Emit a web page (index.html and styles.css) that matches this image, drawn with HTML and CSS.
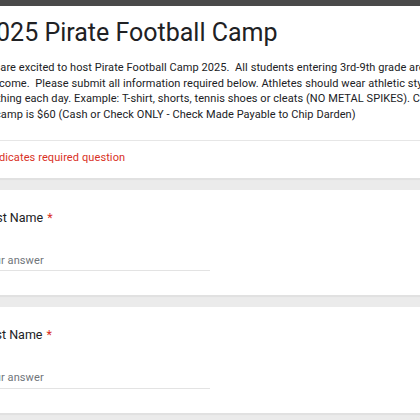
FILE: index.html
```html
<!DOCTYPE html>
<html lang="en">
<head>
<meta charset="utf-8">
<title>2025 Pirate Football Camp</title>
<link rel="stylesheet" href="styles.css">
</head>
<body>
<div class="page">
  <div class="card header">
    <div class="head-main">
      <h1 class="title">2025 Pirate Football Camp</h1>
      <div class="desc">We are excited to host Pirate Football Camp 2025.  All students entering 3rd-9th grade are
welcome.  Please submit all information required below. Athletes should wear athletic style
clothing each day. Example: T-shirt, shorts, tennis shoes or cleats (NO METAL SPIKES). Cost
of camp is $60 (Cash or Check ONLY - Check Made Payable to Chip Darden)</div>
    </div>
    <div class="required">* Indicates required question</div>
  </div>

  <div class="card question">
    <div class="label">First Name<span class="star">*</span></div>
    <div class="answer">Your answer</div>
  </div>

  <div class="card question">
    <div class="label">Last Name<span class="star">*</span></div>
    <div class="answer">Your answer</div>
  </div>

  <div class="card question">
    <div class="label">Grade<span class="star">*</span></div>
    <div class="answer">Your answer</div>
  </div>
</div>
</body>
</html>
```
FILE: styles.css
```css
html, body {
  margin: 0;
  padding: 0;
  background: #ebebeb;
  overflow: hidden;
}

body {
  font-family: Roboto, "Liberation Sans", sans-serif;
  color: #202124;
}

.page {
  margin-left: -43px;
  width: 580px;
  display: flex;
  flex-direction: column;
  gap: 11px;
}

.card {
  background: #ffffff;
  border-bottom: 1px solid #e1e1e1;
  box-shadow: 0 1px 1px rgba(0, 0, 0, 0.04);
}

.header {
  border-top: 6px solid #4a4a4a;
}

.head-main {
  padding: 12px 25px 18px;
  border-bottom: 1px solid #e6e6e6;
}

.title {
  margin: 0;
  font-weight: 400;
  font-size: 25px;
  line-height: 30px;
  color: #202124;
}

.desc {
  margin-top: 12px;
  font-size: 11px;
  line-height: 15.5px;
  letter-spacing: 0.07px;
  white-space: pre;
  color: #202124;
}

.required {
  padding: 9px 25px 12px;
  font-size: 11px;
  line-height: 15.5px;
  letter-spacing: 0.1px;
  color: #d93025;
}

.question {
  padding: 19px 25px 24px;
}

.label {
  font-size: 12.5px;
  line-height: 18px;
  color: #202124;
}

.star {
  color: #d93025;
  padding-left: 4px;
}

.answer {
  margin-top: 26px;
  width: 228px;
  font-size: 11px;
  line-height: 15.5px;
  letter-spacing: 0.1px;
  padding-bottom: 2px;
  border-bottom: 1px solid #e3e3e3;
  color: #70757a;
}
```
